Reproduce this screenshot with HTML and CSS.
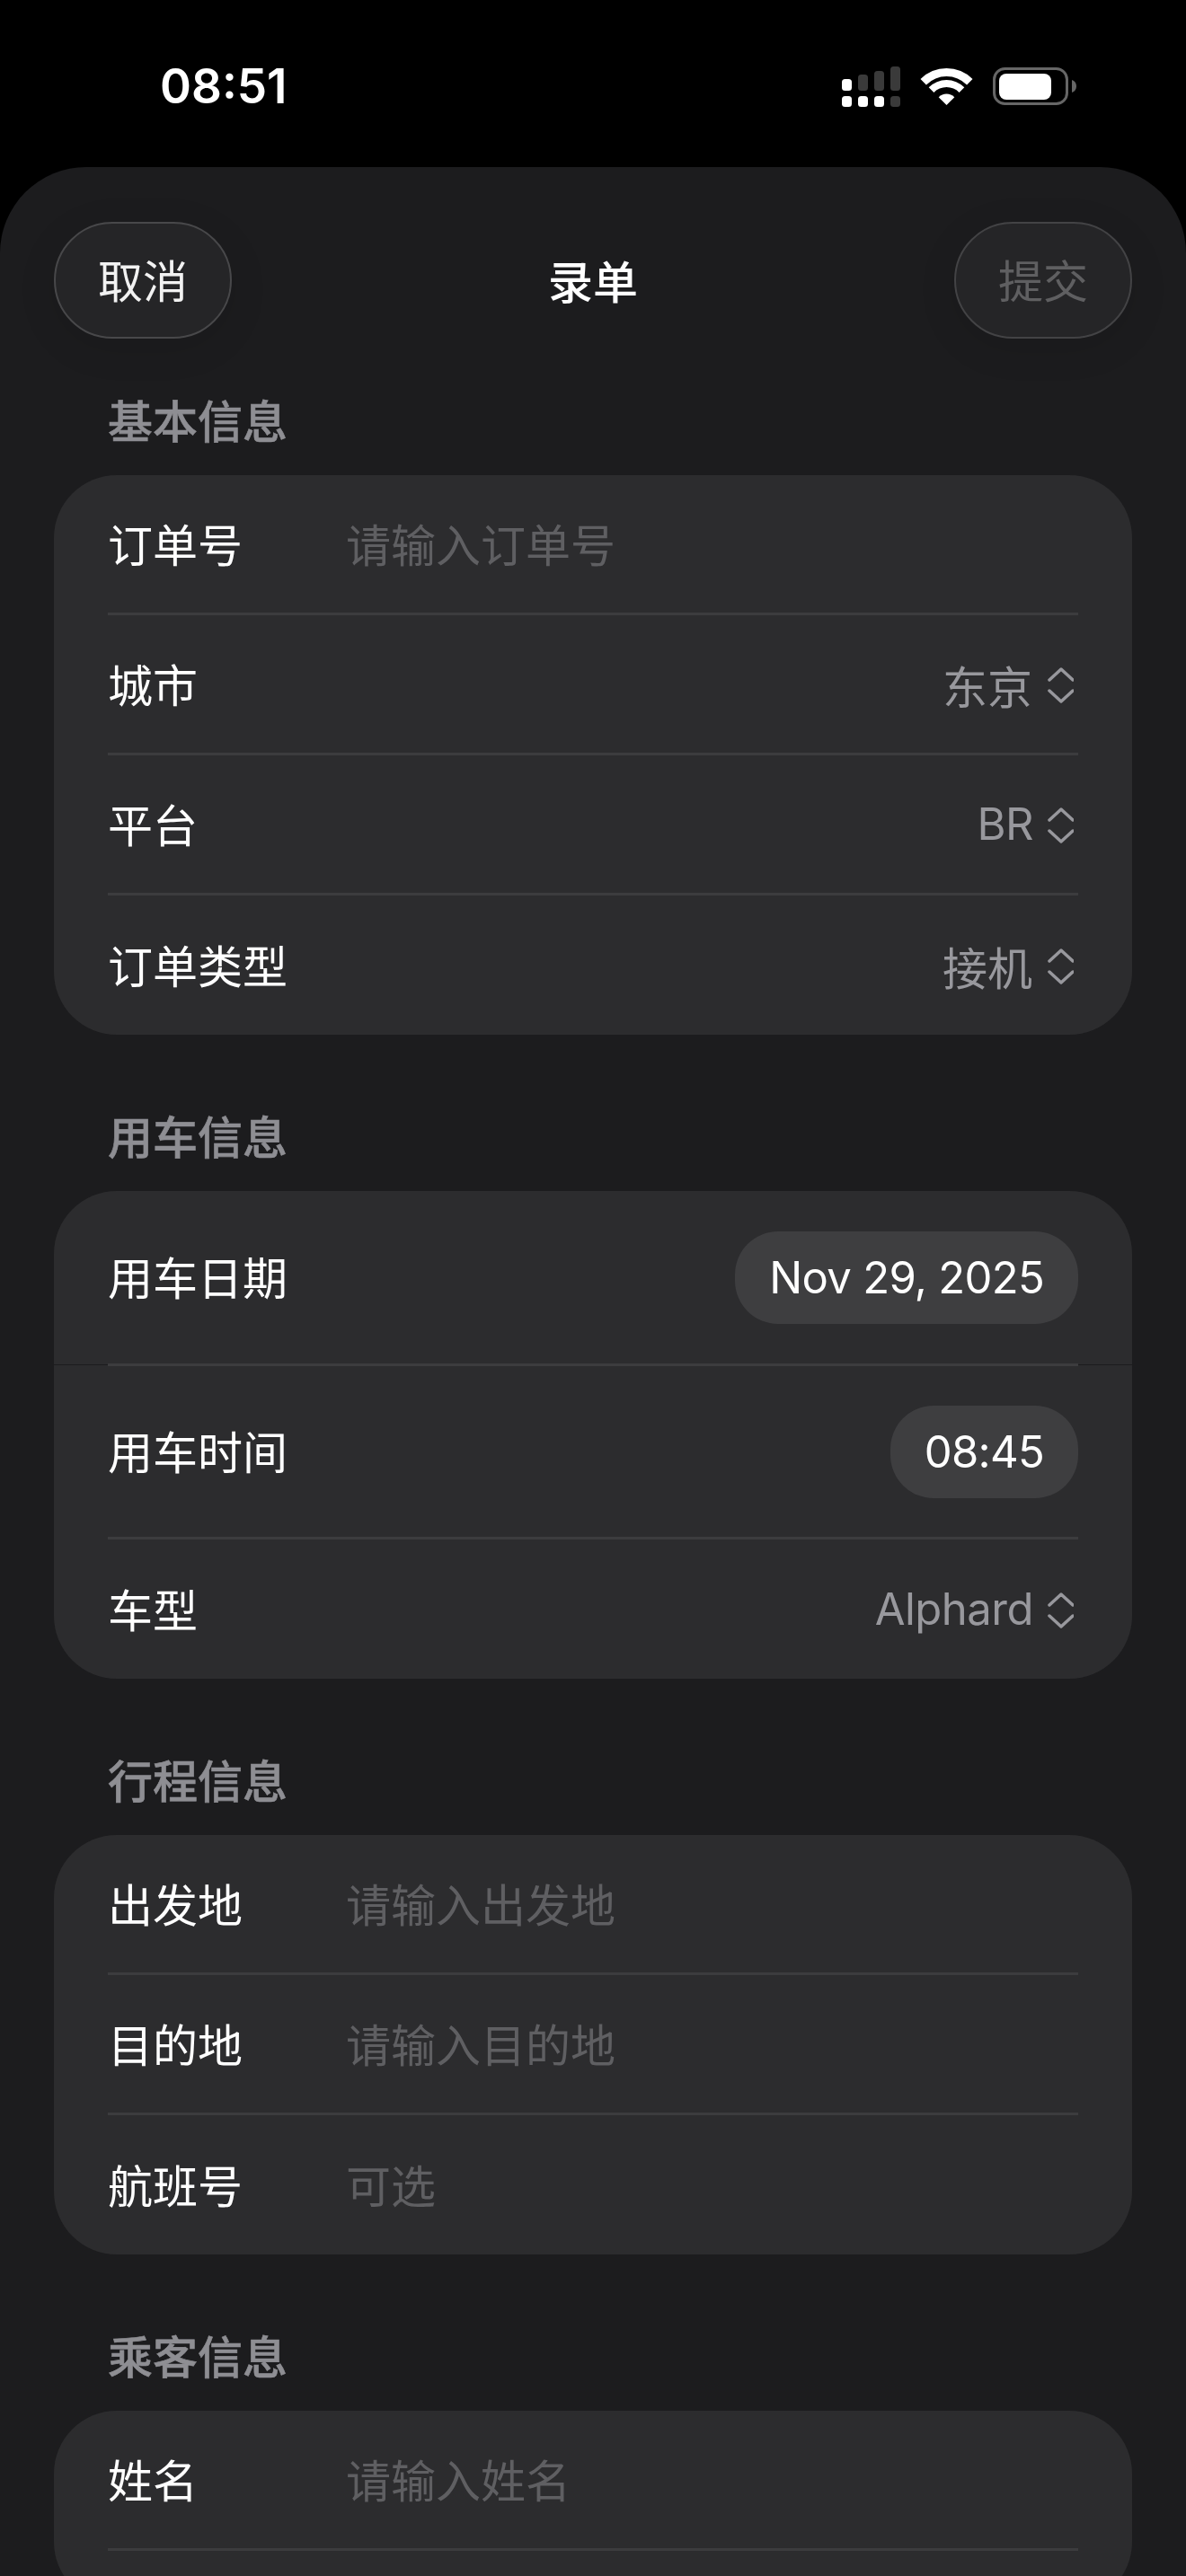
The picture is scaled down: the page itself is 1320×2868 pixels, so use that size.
FILE: index.html
```html
<!DOCTYPE html>
<html>
<head>
    <meta charset="utf-8">
    <title>录单</title>
    <link rel="stylesheet" href="styles.css">
</head>
<body>
    <div class="status-bar">
        <div class="clock">08:51</div>
        <div class="status-icons">
            <svg class="icon-signal" width="65" height="45" viewBox="0 0 65 45">
                <rect x="0" y="14" width="11" height="13" rx="3.5" fill="#fff"/>
                <rect x="18" y="9" width="11" height="18" rx="3.5" fill="#3a3a3a"/>
                <rect x="36" y="5" width="11" height="22" rx="3.5" fill="#3a3a3a"/>
                <rect x="54" y="0" width="11" height="27" rx="3.5" fill="#3a3a3a"/>
                <rect x="0" y="33" width="11" height="12" rx="3.5" fill="#fff"/>
                <rect x="18" y="33" width="11" height="12" rx="3.5" fill="#fff"/>
                <rect x="36" y="33" width="11" height="12" rx="3.5" fill="#fff"/>
                <rect x="54" y="33" width="11" height="12" rx="3.5" fill="#3a3a3a"/>
            </svg>
            <svg class="icon-wifi" width="57" height="42" viewBox="0 0 57 42">
                <path d="M-.5 13A41 41 0 0 1 57.500 13L51.100 19.400A32 32 0 0 0 5.900 19.400Z" fill="#fff"/>
                <path d="M8.700 22.200A28 28 0 0 1 48.300 22.200L42.600 27.900A20 20 0 0 0 14.400 27.900Z" fill="#fff"/>
                <path d="M19.700 33.200A12.500 12.500 0 0 1 37.300 33.200L28.500 42Z" fill="#fff"/>
            </svg>
            <svg class="icon-battery" width="93" height="42" viewBox="0 0 93 42">
                <rect x="1.500" y="1.500" width="81" height="39" rx="12" fill="none" stroke="#666" stroke-width="3"/>
                <rect x="7" y="7" width="58" height="29" rx="8" fill="#fff"/>
                <path d="M88 14C91 15 93 17.500 93 21S91 27 88 28Z" fill="#666"/>
            </svg>
        </div>
    </div>

    <div class="sheet">
        <div class="nav">
            <button class="nav-btn">取消</button>
            <div class="nav-title">录单</div>
            <button class="nav-btn nav-btn-off">提交</button>
        </div>

        <div class="section-title">基本信息</div>
        <div class="card">
            <div class="row">
                <div class="row-label">订单号</div>
                <div class="row-hint">请输入订单号</div>
            </div>
            <div class="row">
                <div class="row-label">城市</div>
                <div class="picker">东京
                    <svg class="updown" width="30" height="42" viewBox="0 0 30 42"><path d="M3 15L16 3L29 15M3 27L16 39L29 27"/></svg>
                </div>
            </div>
            <div class="row">
                <div class="row-label">平台</div>
                <div class="picker picker-latin">BR
                    <svg class="updown" width="30" height="42" viewBox="0 0 30 42"><path d="M3 15L16 3L29 15M3 27L16 39L29 27"/></svg>
                </div>
            </div>
            <div class="row">
                <div class="row-label">订单类型</div>
                <div class="picker">接机
                    <svg class="updown" width="30" height="42" viewBox="0 0 30 42"><path d="M3 15L16 3L29 15M3 27L16 39L29 27"/></svg>
                </div>
            </div>
        </div>

        <div class="section-title">用车信息</div>
        <div class="card">
            <div class="row row-date">
                <div class="row-label">用车日期</div>
                <div class="pill">Nov 29, 2025</div>
            </div>
            <div class="row row-time">
                <div class="row-label">用车时间</div>
                <div class="pill">08:45</div>
            </div>
            <div class="row">
                <div class="row-label">车型</div>
                <div class="picker picker-latin">Alphard
                    <svg class="updown" width="30" height="42" viewBox="0 0 30 42"><path d="M3 15L16 3L29 15M3 27L16 39L29 27"/></svg>
                </div>
            </div>
        </div>

        <div class="section-title">行程信息</div>
        <div class="card">
            <div class="row">
                <div class="row-label">出发地</div>
                <div class="row-hint">请输入出发地</div>
            </div>
            <div class="row">
                <div class="row-label">目的地</div>
                <div class="row-hint">请输入目的地</div>
            </div>
            <div class="row">
                <div class="row-label">航班号</div>
                <div class="row-hint">可选</div>
            </div>
        </div>

        <div class="section-title">乘客信息</div>
        <div class="card card-cut">
            <div class="row">
                <div class="row-label">姓名</div>
                <div class="row-hint">请输入姓名</div>
            </div>
        </div>
    </div>
</body>
</html>
```

FILE: styles.css
```css
html, body {
    margin: 0;
    height: 2868px;
    overflow: hidden;
    background: #000;
}
body {
    font-family: Inter, "Noto Sans CJK SC", sans-serif;
    font-size: 50px;
    color: #fff;
}
.status-bar {
    height: 180px;
    padding: 6px 122px 0 178px;
    display: flex;
    align-items: center;
    justify-content: space-between;
}
.clock {
    font-size: 53px;
    font-weight: 600;
}
.status-icons {
    display: flex;
    align-items: center;
    gap: 23px;
}
.status-icons svg {
    display: block;
}
.icon-wifi {
    overflow: visible;
}
.sheet {
    height: 2682px;
    padding: 61px 60px 0;
    background: #1c1c1e;
    border-radius: 96px 96px 0 0;
}
.nav {
    display: flex;
    align-items: center;
    justify-content: space-between;
    margin-bottom: 63px;
}
.nav-btn {
    width: 198px;
    height: 130px;
    padding: 0 0 4px;
    font: inherit;
    color: #f2f2f2;
    background: #252527;
    border: 2px solid #48484a;
    border-radius: 65px;
    box-shadow: 0 10px 44px rgba(0, 0, 0, 0.1);
}
.nav-btn-off {
    color: #5f5f61;
    border-color: #434345;
}
.nav-title {
    font-weight: 500;
    margin-bottom: 3px;
}
.section-title {
    height: 60px;
    line-height: 60px;
    margin: 85px 0 29px 60px;
    color: #8e8e93;
    font-weight: 500;
    -webkit-text-stroke: 0.6px #8e8e93;
}
.nav + .section-title {
    margin-top: 0;
}
.card {
    background: #2c2c2e;
    border-radius: 70px;
}
.card-cut {
    padding-bottom: 60px;
}
.row {
    position: relative;
    height: 153px;
    margin: 0 60px;
    display: flex;
    align-items: center;
    border-bottom: 3px solid #3c3c3e;
}
.row:last-child {
    height: 155px;
    border-bottom: none;
}
.card-cut .row:last-child {
    height: 153px;
    border-bottom: 3px solid #3c3c3e;
}
.row-label {
    width: 265px;
    flex-shrink: 0;
    margin-bottom: 4px;
}
.row-hint {
    color: #5f5f62;
    margin-bottom: 4px;
}
.picker {
    margin-left: auto;
    display: flex;
    align-items: center;
    color: #98989d;
}
.updown {
    margin: 3px 5px 0 16px;
}
.picker-latin {
    font-size: 49px;
    letter-spacing: -0.5px;
}
.picker-latin .updown {
    margin-left: 15px;
}
.updown path {
    fill: none;
    stroke: #98989d;
    stroke-width: 3.5;
    stroke-linecap: round;
    stroke-linejoin: round;
}
.pill {
    margin-left: auto;
    height: 103px;
    line-height: 103px;
    padding: 0 38px;
    font-size: 49px;
    letter-spacing: -0.7px;
    background: #3e3e40;
    border-radius: 48px;
}
.row-date {
    height: 192px;
}
.row-time {
    height: 190px;
}
/* thin seam either side of the date row divider */
.row-date::before, .row-date::after {
    content: "";
    position: absolute;
    bottom: -2px;
    width: 60px;
    height: 1px;
    background: #1c1c1e;
}
.row-date::before {
    left: -60px;
}
.row-date::after {
    right: -60px;
}
```
